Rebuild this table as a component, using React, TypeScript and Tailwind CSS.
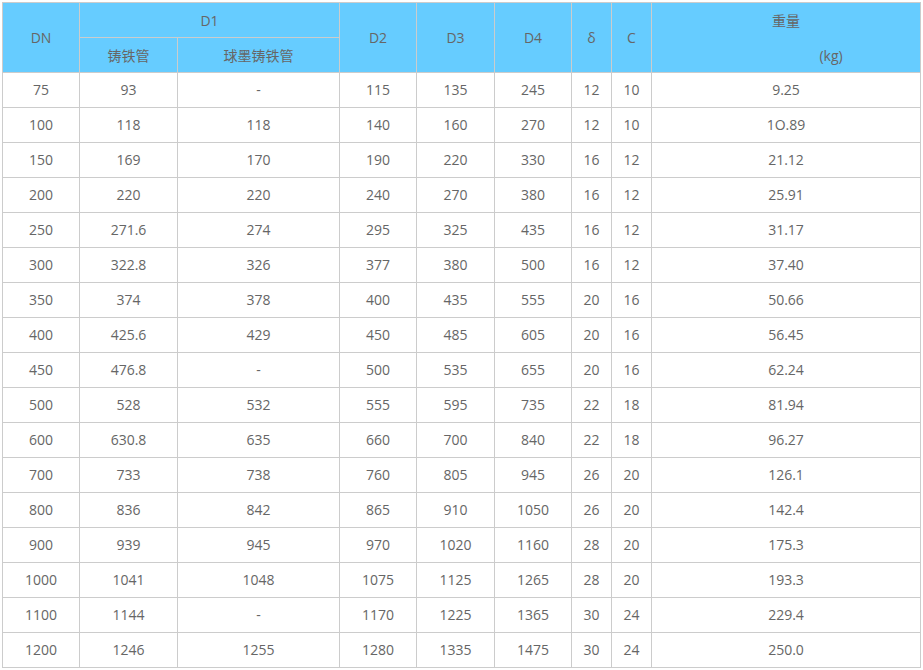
import React from "react";

const rows: string[][] = [
  ["75", "93", "-", "115", "135", "245", "12", "10", "9.25"],
  ["100", "118", "118", "140", "160", "270", "12", "10", "1O.89"],
  ["150", "169", "170", "190", "220", "330", "16", "12", "21.12"],
  ["200", "220", "220", "240", "270", "380", "16", "12", "25.91"],
  ["250", "271.6", "274", "295", "325", "435", "16", "12", "31.17"],
  ["300", "322.8", "326", "377", "380", "500", "16", "12", "37.40"],
  ["350", "374", "378", "400", "435", "555", "20", "16", "50.66"],
  ["400", "425.6", "429", "450", "485", "605", "20", "16", "56.45"],
  ["450", "476.8", "-", "500", "535", "655", "20", "16", "62.24"],
  ["500", "528", "532", "555", "595", "735", "22", "18", "81.94"],
  ["600", "630.8", "635", "660", "700", "840", "22", "18", "96.27"],
  ["700", "733", "738", "760", "805", "945", "26", "20", "126.1"],
  ["800", "836", "842", "865", "910", "1050", "26", "20", "142.4"],
  ["900", "939", "945", "970", "1020", "1160", "28", "20", "175.3"],
  ["1000", "1041", "1048", "1075", "1125", "1265", "28", "20", "193.3"],
  ["1100", "1144", "-", "1170", "1225", "1365", "30", "24", "229.4"],
  ["1200", "1246", "1255", "1280", "1335", "1475", "30", "24", "250.0"],
];

const widths = [77, 98, 162, 77, 78, 77, 40, 40, 269];

export default function App() {
  const th = "border border-[#cccccc] bg-[#66ccff] font-normal text-center p-0";
  return (
    <div
      className="bg-white w-[923px] h-[670px] pl-[2px] pt-[2px] text-[#666666] text-[14px]"
      style={{ fontFamily: '"Open Sans", "Noto Sans CJK SC", sans-serif' }}
    >
      <table className="border-collapse table-fixed w-[919px]">
        <colgroup>
          {widths.map((w, i) => (
            <col key={i} style={{ width: w }} />
          ))}
        </colgroup>
        <thead>
          <tr className="h-[35px]">
            <th rowSpan={2} className={th}>DN</th>
            <th colSpan={2} className={th}>D1</th>
            <th rowSpan={2} className={th}>D2</th>
            <th rowSpan={2} className={th}>D3</th>
            <th rowSpan={2} className={th}>D4</th>
            <th rowSpan={2} className={th}>δ</th>
            <th rowSpan={2} className={th}>C</th>
            <th rowSpan={2} className={th}>
              <div className="leading-[33px] mb-[2px]">重量</div>
              <div className="leading-[33px] pl-[90px]">(kg)</div>
            </th>
          </tr>
          <tr className="h-[35px]">
            <th className={th}>铸铁管</th>
            <th className={th}>球墨铸铁管</th>
          </tr>
        </thead>
        <tbody>
          {rows.map((r, i) => (
            <tr key={i} className="h-[35px]">
              {r.map((c, j) => (
                <td key={j} className="border border-[#cccccc] text-center p-0 leading-[20px] pb-px">
                  {c}
                </td>
              ))}
            </tr>
          ))}
        </tbody>
      </table>
    </div>
  );
}
